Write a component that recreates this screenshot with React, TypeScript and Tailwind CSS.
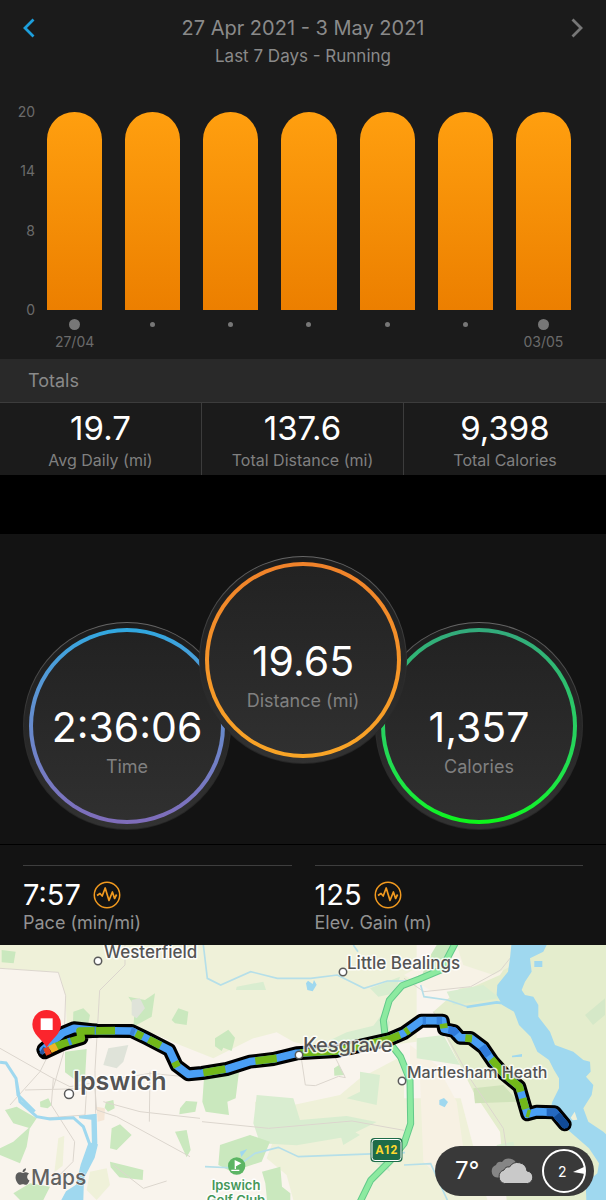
import { FaApple } from "react-icons/fa";

const days = [
  { label: "27/04", miles: 20 },
  { label: "", miles: 20 },
  { label: "", miles: 20 },
  { label: "", miles: 20 },
  { label: "", miles: 20 },
  { label: "", miles: 20 },
  { label: "03/05", miles: 20 },
];

const totals = [
  { value: "19.7", label: "Avg Daily (mi)" },
  { value: "137.6", label: "Total Distance (mi)" },
  { value: "9,398", label: "Total Calories" },
];

const Header = () => {
  return (
    <header className="text-center text-[#8a8a8a]">
      <div className="flex h-8 items-center justify-between px-[23px]">
        <button type="button" aria-label="Previous week">
          <svg className="h-5 w-3" viewBox="0 0 12 20" fill="none">
            <path d="M10.500 1.500 2 10l8.500 8.500" stroke="#1d9fdc" strokeWidth="2.800" />
          </svg>
        </button>
        <h1 className="text-[20px] leading-8">27 Apr 2021 - 3 May 2021</h1>
        <button type="button" aria-label="Next week">
          <svg className="h-5 w-3" viewBox="0 0 12 20" fill="none">
            <path d="M1.500 1.500 10 10l-8.500 8.500" stroke="#777777" strokeWidth="2.800" />
          </svg>
        </button>
      </div>
      <h2 className="text-[17px] leading-6">Last 7 Days - Running</h2>
    </header>
  );
};

const Chart = () => {
  return (
    <div className="mt-[44px] flex pr-[35px] text-[#6b6b6b]">
      <div className="-mt-[10px] flex w-[47px] shrink-0 flex-col pr-3 text-right text-[14px] leading-5">
        <span className="h-[59px]">20</span>
        <span className="h-[60px]">14</span>
        <span className="h-[79px]">8</span>
        <span className="h-5">0</span>
      </div>
      <div className="flex flex-1 gap-[23px]">
        {days.map((day, i) => (
          <div key={i} className="flex flex-1 flex-col items-center">
            <div className="flex h-[198px] w-full items-end">
              <div
                className="w-full rounded-t-full bg-linear-to-b from-[#ff9f0f] to-[#ec7f00]"
                style={{ height: `${(day.miles / 20) * 100}%` }}
              />
            </div>
            <div className="mt-2 flex h-3 items-center">
              {day.label ? (
                <div className="size-[11px] rounded-full bg-[#777777]" />
              ) : (
                <div className="size-[5px] rounded-full bg-[#777777]" />
              )}
            </div>
            <span className="mt-[2px] h-5 text-[14px] leading-5">{day.label}</span>
          </div>
        ))}
      </div>
    </div>
  );
};

const Totals = () => {
  return (
    <section>
      <h3 className="border-b border-[#3c3c3c] bg-[#292929] px-7 text-[18px] leading-[43px] text-[#8a8a8a]">
        Totals
      </h3>
      <div className="grid grid-cols-3 divide-x divide-[#3c3c3c] bg-[#1b1b1b] text-center">
        {totals.map((item) => (
          <div key={item.label} className="flex flex-col pt-[6px] pb-[3px]">
            <span className="text-[33px] leading-[39px] text-white">{item.value}</span>
            <span className="text-[16px] leading-6 text-[#808080]">{item.label}</span>
          </div>
        ))}
      </div>
    </section>
  );
};

const Dial = ({ value, label, ring }: { value: string; label: string; ring: string }) => {
  return (
    <div className="size-[208px] rounded-full bg-linear-to-b from-[#666666] via-[#2d2d2d] to-[#252525] p-px">
      <div className="size-full rounded-full bg-linear-to-b from-[#1c1c1c] to-[#323232] p-[5px]">
        <div className={"size-full rounded-full bg-linear-to-b p-1 " + ring}>
          <div className="flex size-full flex-col items-center rounded-full bg-linear-to-b from-[#222222] to-[#303030] pt-[70px]">
            <span className="text-[41px] leading-[51px] text-white">{value}</span>
            <span className="text-[18px] leading-7 text-[#808080]">{label}</span>
          </div>
        </div>
      </div>
    </div>
  );
};

const PulseIcon = () => {
  return (
    <svg className="size-7" viewBox="0 0 28 28" fill="none" stroke="#f29a1f">
      <circle cx="14" cy="14" r="12.700" strokeWidth="1.500" />
      <path
        d="M4 14.500 7 12.500l2.200 2.500L12.200 7l3.800 12.500L19.400 11l2.200 6.500 2-4"
        strokeWidth="1.700"
        strokeLinejoin="round"
      />
    </svg>
  );
};

const Metric = ({ value, label }: { value: string; label: string }) => {
  return (
    <div className="flex-1 border-t border-[#3e3e3e] pt-[13px]">
      <div className="flex items-center gap-3">
        <span className="text-[29px] leading-8 text-white">{value}</span>
        <PulseIcon />
      </div>
      <p className="text-[18px] leading-6 text-[#929292]">{label}</p>
    </div>
  );
};

const route =
  "130,314 188,264 222,250 290,257 395,258 440,280 508,315 530,362 565,388 606,384 680,372 750,350 820,342 890,325 1010,318 1100,298 1170,282 1212,264 1264,227 1328,227 1332,252 1362,258 1380,278 1412,279 1450,308 1480,352 1510,385 1558,425 1582,508 1610,500 1664,502 1694,538";
const loop = "134,322 190,296 244,280 240,260 290,257";

const segments = [
  { color: "#72b81a", points: "160,308 190,296 244,280 240,258 345,257" },
  { color: "#3d8fe8", points: "205,291 213,288" },
  { color: "#3b8adf", points: "284,257 288,257" },
  { color: "#3b82d6", points: "392,258 404,262" },
  { color: "#72b81a", points: "408,265 428,275" },
  { color: "#72b81a", points: "446,283 482,302" },
  { color: "#72b81a", points: "524,350 532,366" },
  { color: "#72b81a", points: "610,383 676,372" },
  { color: "#72b81a", points: "766,348 830,340" },
  { color: "#72b81a", points: "900,324 1010,318 1100,298 1170,282 1200,270" },
  { color: "#72b81a", points: "1216,262 1226,255" },
  { color: "#3583e0", points: "1268,227 1278,227" },
  { color: "#3583e0", points: "1310,227 1326,227" },
  { color: "#72b81a", points: "1330,236 1332,250" },
  { color: "#2f7bdc", points: "1345,255 1362,258 1370,268" },
  { color: "#72b81a", points: "1396,279 1416,281" },
  { color: "#2f7bdc", points: "1446,304 1466,332" },
  { color: "#72b81a", points: "1474,342 1510,385 1558,425 1562,440" },
  { color: "#72b81a", points: "1568,460 1577,492" },
  { color: "#72b81a", points: "1580,504 1590,507" },
  { color: "#2468c0", points: "1640,502 1664,502 1680,522" },
  { color: "#114a96", points: "1670,510 1694,538" },
  { color: "#2557a0", points: "124,314 134,320" },
  { color: "#f0b429", points: "150,314 170,304" },
  { color: "#e8421f", points: "134,322 150,315" },
];

const places = [
  { name: "Westerfield", size: 17, x: 104, y: 13, dotX: 98, dotY: 16 },
  { name: "Little Bealings", size: 17, x: 347, y: 24, dotX: 343, dotY: 27 },
  { name: "Martlesham Heath", size: 16, x: 407, y: 133, dotX: 402, dotY: 136 },
];

const RouteMap = () => {
  return (
    <svg className="block w-full" viewBox="0 0 606 255" role="img" aria-label="Route map">
      <g transform="scale(0.33333)">
        <rect width="1818" height="768" fill="#f9f4ed" />
        {/* farmland */}
        <g fill="#eff1d9">
          <path d="M0 0H1250V290L1000 320 880 290 830 262 760 280 640 340 540 300 400 240 200 235 196 150 176 82 0 70Z" />
          <path d="M765 470 880 480 1020 450 1080 400 1212 330V765H880L860 690 800 640 830 560 770 540Z" />
          <path d="M175 580l18-8-5 90-25 20zM270 680l50-10 10 50-40 45-30-30z" />
          <path d="M1212 460h170l80 305h-250z" />
        </g>
        <path d="M1380 130 1500 60 1560 0H1818V765H1520L1500 560 1420 440 1300 200Z" fill="#e4edcd" />
        <path d="M1212 90 1370 0H1560L1500 90 1420 125 1300 140Z" fill="#f7f2e6" />
        <path d="M1370 0h190l-20 60-60 30-90-30z" fill="#eef0d9" />
        <path d="M1230 300l80 60 60 110 20 140-60 100-60-60-10-250-30-40z" fill="#f7f1e3" />
        {/* woods and parks */}
        <g fill="#d9edd0">
          <path d="M770 450l110 10 20 65 140-12 90 18-90 44-150 26-110-6-20-60zM710 125l80-15 8 25h-90zM960 300l80-38 80-20 30-40 20 30-10 50-60 22zM1080 380l60 10-10 90-90-20 40-20zM1010 530l70 40-50 30zM1250 280l80-10 50 90-130-20zM1340 140l110-20 50 40-140 20z" />
          <path d="M1110 130l90-35-15 50-50 10zM1120 650l40-20 10 50zM1490 600l50-10 30 120-70-20z" />
        </g>
        <g fill="#cae8be">
          <path d="M5 15l42 5-6 35-36-3zM220 200l30-10 20 20-12 60-40-8zM385 155l50 10 30-20-10 70-55 30 5-60zM195 320l65-8-5 92-20 8-40-30zM535 190l30 10-5 40-35-5-10-10z" />
          <path d="M15 495l35-10 60 35-20 30-50-15zM0 610l40-20 50-45-10 60-20 50-60-25zM120 470l25-10 10 20-12 10-22-4zM318 470l22-5 4 25-20 10-10-12zM335 550l25-12 35 32-45 45-20-5zM330 650l40 10 60 15-2 30-70-8-26-30zM525 560l35-5 12 60-12 22zM540 490l18-22 34 2-6 30-48 8zM40 745l50-30 60 10-20 40H60z" />
          <path d="M612 400l105-20-10 80-25 10 5 40-70-10-10-30zM645 280l40-26 20 24-10 40-25-10-5 10-20-14zM660 600l90-30 60 20-25 60-90 30-40-20zM786 680l55-15 5 60 25 20v20h-70l-5-50zM1002 370l15-10 16 30-30 2zM1310 0h50l-30 40-30 50-40 20 20-60z" />
        </g>
        <g fill="#d0e3ba">
          <path d="M1420 430l90-10 45 50-130 5z" />
          <path d="M1755 210l60-50v50l-36 30z" fill="#d5e8c8" />
        </g>
        <path d="M395 165l25-5 15 30-25 30-15-10zM325 310l60-10-15 50-20 20-40-10z" fill="#dfe3d9" />
        <path d="M290 485l25 5-2 35-20 5z" fill="#f5e6d6" />
        {/* minor roads */}
        <g fill="none" stroke="#dcd6ce" strokeWidth="3">
          <path d="M0 70l175 12 22 70-6 170-32 110M375 0v60l-76 76-14 240 2 130M0 310l150 85 60 30 240-40 156 15M160 400l-6 80 70 110-5 60-60 60M75 435l210-5 5 65 60 20 220 120M310 470l110 30 180 20M450 380l-2 150M30 480l90-100 30-60M260 430l-5 80-130 10M340 660l90 70 70-22" />
          <path d="M904 340l12 80 30 2 70-28 20 4-30-60M606 530l200 20 250-22 156 28M1212 100l60 40 140-15 90-50 60-75M1300 200l110 200 100 150 12 80" />
        </g>
        {/* streams and rivers */}
        <g fill="none" stroke="#b5dfe9" strokeWidth="5">
          <path d="M610 0l12 100 40 20 90-40 80 20 100 0 80-10 80 40 70-22 60 0M1060 0l14 20M615 665l90 4 60-44 70-18 60 28 320-12M1262 120l10 35 70 10 60 20M1212 660l80-4 50 109" />
        </g>
        <path d="M1400 186l90-14 90 12" fill="none" stroke="#9fd8ef" strokeWidth="8" />
        <path d="M0 352 18 354 48 400 60 470 110 515 150 522 220 518 250 545 270 600M48 400l6 50 50 50" fill="none" stroke="#9fd8ef" strokeWidth="9" />
        <g fill="#9fd8ef">
          <path d="M236 512l54-6 2 90-16 6-2-78-36-4zM266 592l28 6-10 40-32 62-2 65h-66l14-26 30-20 14-60z" />
          <path d="M918 115l6-8 14 10 4-12 8 14-12 20-16-4zM1603 48h24v18h-24zM1536 332l30-5v8l-30 2zM1318 465l14-6 12 12-10 16-16-8zM720 620l22-8-18 24z" />
          <path d="M1565 0h75l-10 20-40 20 5 40-20 30-10 25 10 15 25 5 15 25v35l35 45 15 40 55 20 30 25 20 5 2 30-14 15 22 25-5 30-25 40 15 40 45 30 27 26V765h-78l-2-50 35-30 5-30-30-45-80-70-5-30-30-20 5-20 20-40v-30l-15-25-15-30-35-25-20-45-35-35-15-40-35-20-17-30 2-30 32-40 6-40 4-40z" />
        </g>
        <path d="M1724 500l8 24-14 2-6-8z" fill="#eef0d9" />
        {/* A12 */}
        <g fill="none" strokeLinejoin="round">
          <path d="M1368-10l-44 84-66 28-52 20-38 44-18 60 6 50 46 60 28 70 2 130-20 60-40 50-60 60-44 90-14 50" stroke="#63c98a" strokeWidth="21" />
          <path d="M1368-10l-44 84-66 28-52 20-38 44-18 60 6 50 46 60 28 70 2 130-20 60-40 50-60 60-44 90-14 50" stroke="#8ceaa0" strokeWidth="15" />
        </g>
        {/* route */}
        <g fill="none" strokeLinejoin="round">
          <polyline points={loop} stroke="#000000" strokeWidth="42" strokeLinecap="round" />
          <polyline points={route} stroke="#000000" strokeWidth="42" strokeLinecap="round" />
          <polyline points={route} stroke="#4a9ff5" strokeWidth="23" strokeLinecap="round" />
          {segments.map((s) => (
            <polyline key={s.points} points={s.points} stroke={s.color} strokeWidth="23" />
          ))}
          <circle cx="1695" cy="539" r="11" fill="#114a96" />
        </g>
        {/* finish pin */}
        <path d="M140 307C124 281 97 268 97 238a43 43 0 0 1 86 0c0 30-27 43-43 69z" fill="#fb252d" />
        <rect x="122" y="220" width="36" height="35" fill="#ffffff" />
        {/* golf club */}
        <circle cx="710" cy="663" r="26" fill="#5cb564" />
        <path d="M706 672v-24l14 7-14 8M694 676h24" fill="#ffffff" stroke="#ffffff" strokeWidth="4" />
      </g>

      <g fill="#ffffff" stroke="#5a5a5a" strokeWidth="1.500">
        {places.map((p) => (
          <circle key={p.name} cx={p.dotX} cy={p.dotY} r="3.700" />
        ))}
        <circle cx="69" cy="149" r="4.500" />
        <circle cx="299" cy="110" r="3.700" />
      </g>

      <g fill="#545454" stroke="#ffffff" strokeOpacity="0.850" strokeWidth="3" strokeLinejoin="round" paintOrder="stroke" fontWeight="500">
        {places.map((p) => (
          <text key={p.name} x={p.x} y={p.y} fontSize={p.size}>
            {p.name}
          </text>
        ))}
        <text x="303" y="107" fontSize="20">Kesgrave</text>
        <text x="73" y="145" fontSize="25" fontWeight="600">Ipswich</text>
        <text x="31" y="240" fontSize="21" fill="#626262" strokeWidth="1">Maps</text>
        <g fill="#45985a" fontSize="13" textAnchor="middle" fontWeight="600">
          <text x="236" y="245">Ipswich</text>
          <text x="236" y="260">Golf Club</text>
        </g>
      </g>
      <FaApple x="13" y="222" size={19} fill="#5c5c5c" />

      <rect x="370.500" y="193" width="32" height="24" rx="4" fill="#1d6b48" />
      <rect x="372" y="194.500" width="29" height="21" rx="3" fill="#1d6b48" stroke="#ffffff" />
      <text x="386.500" y="209" fontSize="12" fontWeight="700" textAnchor="middle" fill="#ffd92e" className="font-['Roboto',sans-serif]">
        A12
      </text>
    </svg>
  );
};

const Weather = () => {
  return (
    <div className="absolute right-3 bottom-1 flex h-[50px] items-center rounded-full bg-[#393939] pr-2 pl-5 text-white">
      <span className="w-[34px] text-[24px]">7°</span>
      <svg className="mr-2 h-[26px] w-[45px]" viewBox="0 0 45 26">
        <path
          d="M8 19.500a6.500 6.500 0 0 1-1-12.500 5 5 0 0 1 6-3 8.500 8.500 0 0 1 15 3l-4 12.500z"
          fill="#858585"
        />
        <path
          d="M15.500 25.500a7 7 0 0 1-.5-13.500 5 5 0 0 1 5.500-3 9.500 9.500 0 0 1 17.500 4 6.300 6.300 0 0 1 .5 12.500z"
          fill="#c9c9c9"
          stroke="#393939"
        />
      </svg>
      <div className="grid size-[44px] place-items-center rounded-full border-2 border-white">
        <div className="flex items-center pl-[14px] text-[14px]">
          2
          <svg className="ml-[6px] h-2 w-3" viewBox="0 0 12 8">
            <path d="M0 5 11 0l1 7z" fill="#ffffff" />
          </svg>
        </div>
      </div>
    </div>
  );
};

const App = () => {
  return (
    <main className="w-full bg-black font-['Inter',sans-serif]">
      <section className="bg-[#1b1b1b] pt-3 pb-[7px]">
        <Header />
        <Chart />
      </section>
      <Totals />
      <section className="mt-[59px] bg-[#131313]">
        <div className="flex justify-center border-b border-black pt-[22px] pb-[14px]">
          <div className="mt-[66px]">
            <Dial value="2:36:06" label="Time" ring="from-[#2ea8e0] to-[#7f6cba]" />
          </div>
          <div className="z-10 -mx-8 pb-[66px]">
            <Dial value="19.65" label="Distance (mi)" ring="from-[#f0822a] to-[#f9a526]" />
          </div>
          <div className="mt-[66px]">
            <Dial value="1,357" label="Calories" ring="from-[#33aa7c] to-[#0cf516]" />
          </div>
        </div>
        <div className="flex gap-[23px] px-[23px] pt-5 pb-[10px]">
          <Metric value="7:57" label="Pace (min/mi)" />
          <Metric value="125" label="Elev. Gain (m)" />
        </div>
      </section>
      <div className="relative">
        <RouteMap />
        <Weather />
      </div>
    </main>
  );
};

export default App;
